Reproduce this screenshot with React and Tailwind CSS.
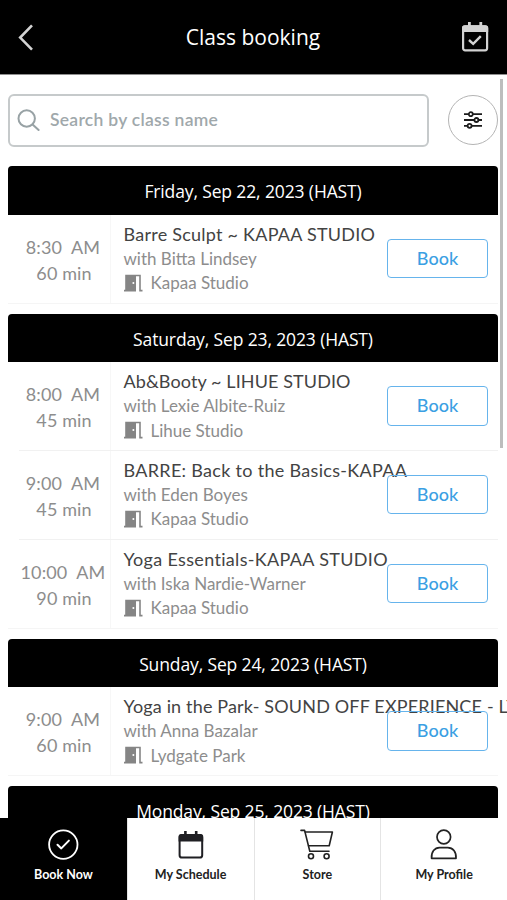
import React from 'react'

const days = [
  {
    date: 'Friday, Sep 22, 2023 (HAST)',
    classes: [
      { time: '8:30', length: '60 min', title: 'Barre Sculpt ~ KAPAA STUDIO', spacing: 'tracking-[0.24px]', teacher: 'with Bitta Lindsey', place: 'Kapaa Studio' },
    ],
  },
  {
    date: 'Saturday, Sep 23, 2023 (HAST)',
    classes: [
      { time: '8:00', length: '45 min', title: 'Ab&Booty ~ LIHUE STUDIO', spacing: 'tracking-[0.1px]', teacher: 'with Lexie Albite-Ruiz', place: 'Lihue Studio' },
      { time: '9:00', length: '45 min', title: 'BARRE: Back to the Basics-KAPAA', spacing: 'tracking-[0.3px]', teacher: 'with Eden Boyes', place: 'Kapaa Studio' },
      { time: '10:00', length: '90 min', title: 'Yoga Essentials-KAPAA STUDIO', spacing: 'tracking-[0.33px]', teacher: 'with Iska Nardie-Warner', place: 'Kapaa Studio' },
    ],
  },
  {
    date: 'Sunday, Sep 24, 2023 (HAST)',
    classes: [
      { time: '9:00', length: '60 min', title: 'Yoga in the Park- SOUND OFF EXPERIENCE - LYDGATE', spacing: 'tracking-[0.16px]', teacher: 'with Anna Bazalar', place: 'Lydgate Park' },
    ],
  },
  { date: 'Monday, Sep 25, 2023 (HAST)', classes: [] },
]

const DoorIcon = () => (
  <svg width="19" height="18" viewBox="0 0 19 18" className="shrink-0 text-[#858585]">
    <path d="M1.2 .8H12V17.4H0V15.8H1.2Z" fill="currentColor" />
    <path d="M12 1.5H16V16.6H18.5" fill="none" stroke="currentColor" strokeWidth="1.6" />
    <circle cx="9.4" cy="9" r="1" fill="#fff" />
  </svg>
)

const CheckCircleIcon = () => (
  <svg width="32" height="32" viewBox="0 0 32 32" fill="none" stroke="#fff" strokeLinecap="round" strokeLinejoin="round">
    <circle cx="16.3" cy="15.6" r="14.2" strokeWidth="1.8" />
    <path d="M10.5 15.8L14.3 19.4L21.9 11.6" strokeWidth="2" />
  </svg>
)

const CalendarIcon = () => (
  <svg width="32" height="32" viewBox="0 0 32 32" fill="none">
    <rect x="4.6" y="6.2" width="22.6" height="22.4" rx="2.4" stroke="#1f1f23" strokeWidth="2" />
    <path d="M3.6 12.6V7.5Q3.6 5 6.1 5H25.7Q28.2 5 28.2 7.5V12.6Z" fill="#1f1f23" />
    <path d="M10.4 2V7M21.2 2V7" stroke="#1f1f23" strokeWidth="2.6" />
  </svg>
)

const CartIcon = () => (
  <svg width="34" height="32" viewBox="0 0 34 32" fill="none" stroke="#222" strokeWidth="1.6" strokeLinecap="round" strokeLinejoin="round">
    <path d="M1 1.4H4.6L9.8 22.2H29" />
    <path d="M5.2 3H32.4L29.2 16.8H8.6" />
    <circle cx="11" cy="27.2" r="2.5" />
    <circle cx="26.6" cy="27.2" r="2.5" />
  </svg>
)

const ProfileIcon = () => (
  <svg width="32" height="32" viewBox="0 0 32 32" fill="none" stroke="#222" strokeWidth="1.7" strokeLinejoin="round">
    <circle cx="15.8" cy="8" r="6.8" />
    <path d="M3.6 29.4C3.1 23 6.6 18.6 11.6 18.6H19.8C24.8 18.6 28.5 23 28 29.4Z" />
  </svg>
)

const tabs = [
  { label: 'Book Now', icon: CheckCircleIcon, active: true },
  { label: 'My Schedule', icon: CalendarIcon },
  { label: 'Store', icon: CartIcon },
  { label: 'My Profile', icon: ProfileIcon },
]

const Header = () => (
  <header className="flex h-[75px] shrink-0 items-center justify-between border-b border-[#8f8f8f] bg-black pl-[17px] pr-[18px]">
    <svg width="28" height="28" viewBox="0 0 28 28" fill="none" stroke="#d4d4d4" strokeWidth="2.6">
      <path d="M15 2.4L3.2 14.6L15 26.6" />
    </svg>
    <h1 className="pt-0.5 font-['Open_Sans'] text-[21px] text-white">Class booking</h1>
    <svg width="28" height="30" viewBox="0 0 28 30" fill="none">
      <rect x="2.1" y="4.3" width="24" height="24" rx="2" stroke="#d2d2d2" strokeWidth="2.2" />
      <path d="M1 10V6Q1 3.2 4 3.2H24Q27.2 3.2 27.2 6V10Z" fill="#d2d2d2" />
      <path d="M8.4 0V4M19.8 0V4" stroke="#d2d2d2" strokeWidth="2.8" />
      <path d="M8 18L12.2 21.8L19.8 14.2" stroke="#d2d2d2" strokeWidth="2.4" />
    </svg>
  </header>
)

const SearchBar = () => (
  <div className="flex items-start justify-between">
    <div className="flex h-[53px] w-[421px] items-center gap-[10px] rounded-md border-2 border-[#c6cacb] pl-[7px] text-[17.5px] font-semibold text-[#a0a8ab]">
      <svg width="23" height="23" viewBox="0 0 23 23" fill="none" stroke="#98a2a5" strokeWidth="2" strokeLinecap="round">
        <circle cx="9.7" cy="9.5" r="8.2" />
        <path d="M15.6 15.4L21.6 21" />
      </svg>
      <span className="tracking-[0.28px]">Search by class name</span>
    </div>
    <button className="mt-px flex size-[50px] items-center justify-center rounded-full border border-[#b4b4b4]">
      <svg width="20" height="20" viewBox="0 0 20 20" fill="none" stroke="#1c1c1c" strokeWidth="1.8">
        <path d="M1 4.2H5.8M9.8 4.2H19M1 10H11.4M15.4 10H19M1 15.8H4.6M8.6 15.8H19" />
        <circle cx="7.8" cy="4.2" r="2" />
        <circle cx="13.4" cy="10" r="2" />
        <circle cx="6.6" cy="15.8" r="2" />
      </svg>
    </button>
  </div>
)

const ClassRow = ({ item, last }) => (
  <div className="flex h-[88.75px]">
    <div className={`flex shrink-0 border-b ${last ? 'w-[103px] border-[#f5f5f5]' : 'ml-[11px] w-[92px] border-[#f1f1f1]'}`}>
      <div className={`flex flex-1 flex-col items-center border-r border-[#f7f7f7] pt-[19px] text-[18px] leading-[26px] text-[#8d8d8d] ${last ? 'pl-2' : '-ml-[3px]'}`}>
        <span className="flex gap-[9px] tracking-[0.1px]">
          <span>{item.time}</span>
          <span>AM</span>
        </span>
        <span className="pl-0.5 tracking-[0.1px]">{item.length}</span>
      </div>
    </div>
    <div className={`flex flex-1 border-b ${last ? 'border-[#f5f5f5]' : 'border-[#f1f1f1]'}`}>
      <div className="w-[276px] shrink-0 whitespace-nowrap pl-[12.5px] pt-[7px] text-[#8d8d8d]">
        <h3 className={`text-[18px] leading-[25px] text-[#434343] ${item.spacing}`}>{item.title}</h3>
        <p className="text-[17px] leading-6">{item.teacher}</p>
        <p className="flex h-6 items-center gap-2 text-[17px]">
          <DoorIcon />
          <span>{item.place}</span>
        </p>
      </div>
      <button className="mt-[23.75px] h-[39.5px] w-[101px] shrink-0 rounded border-[1.5px] border-[#66b4ec] text-[18px] font-medium text-[#3b9fe3]">
        Book
      </button>
    </div>
  </div>
)

const TabBar = () => (
  <nav className="grid h-[82px] shrink-0 grid-cols-4 bg-white">
    {tabs.map(({ label, icon: Icon, active }) => (
      <div
        key={label}
        className={`flex flex-col items-center pt-[11px] ${active ? 'bg-black text-white' : 'border-l border-[#e4e4e4] text-[#222]'}`}
      >
        <Icon />
        <span className="mt-1.5 text-[12.5px] font-bold leading-4">{label}</span>
      </div>
    ))}
  </nav>
)

export default function App() {
  return (
    <div className="relative flex h-[900px] w-full flex-col overflow-hidden bg-white font-['Lato',sans-serif]">
      <Header />
      <main className="min-h-0 flex-1 overflow-hidden pl-2 pr-[9px] pt-[19px]">
        <SearchBar />
        <div className="mt-[19px] flex flex-col gap-[10px]">
          {days.map((day) => (
            <section key={day.date}>
              <h2 className="h-[48.75px] rounded-t bg-black text-center font-['Open_Sans'] text-[17.5px] leading-[50px] tracking-[-0.13px] text-white">
                {day.date}
              </h2>
              {day.classes.map((item, i) => (
                <ClassRow key={item.title} item={item} last={i === day.classes.length - 1} />
              ))}
            </section>
          ))}
        </div>
      </main>
      <TabBar />
      {/* Scroll thumb */}
      <div className="absolute right-[4px] top-[79px] h-[369px] w-[3px] bg-[#bdbdbd]" />
    </div>
  )
}
